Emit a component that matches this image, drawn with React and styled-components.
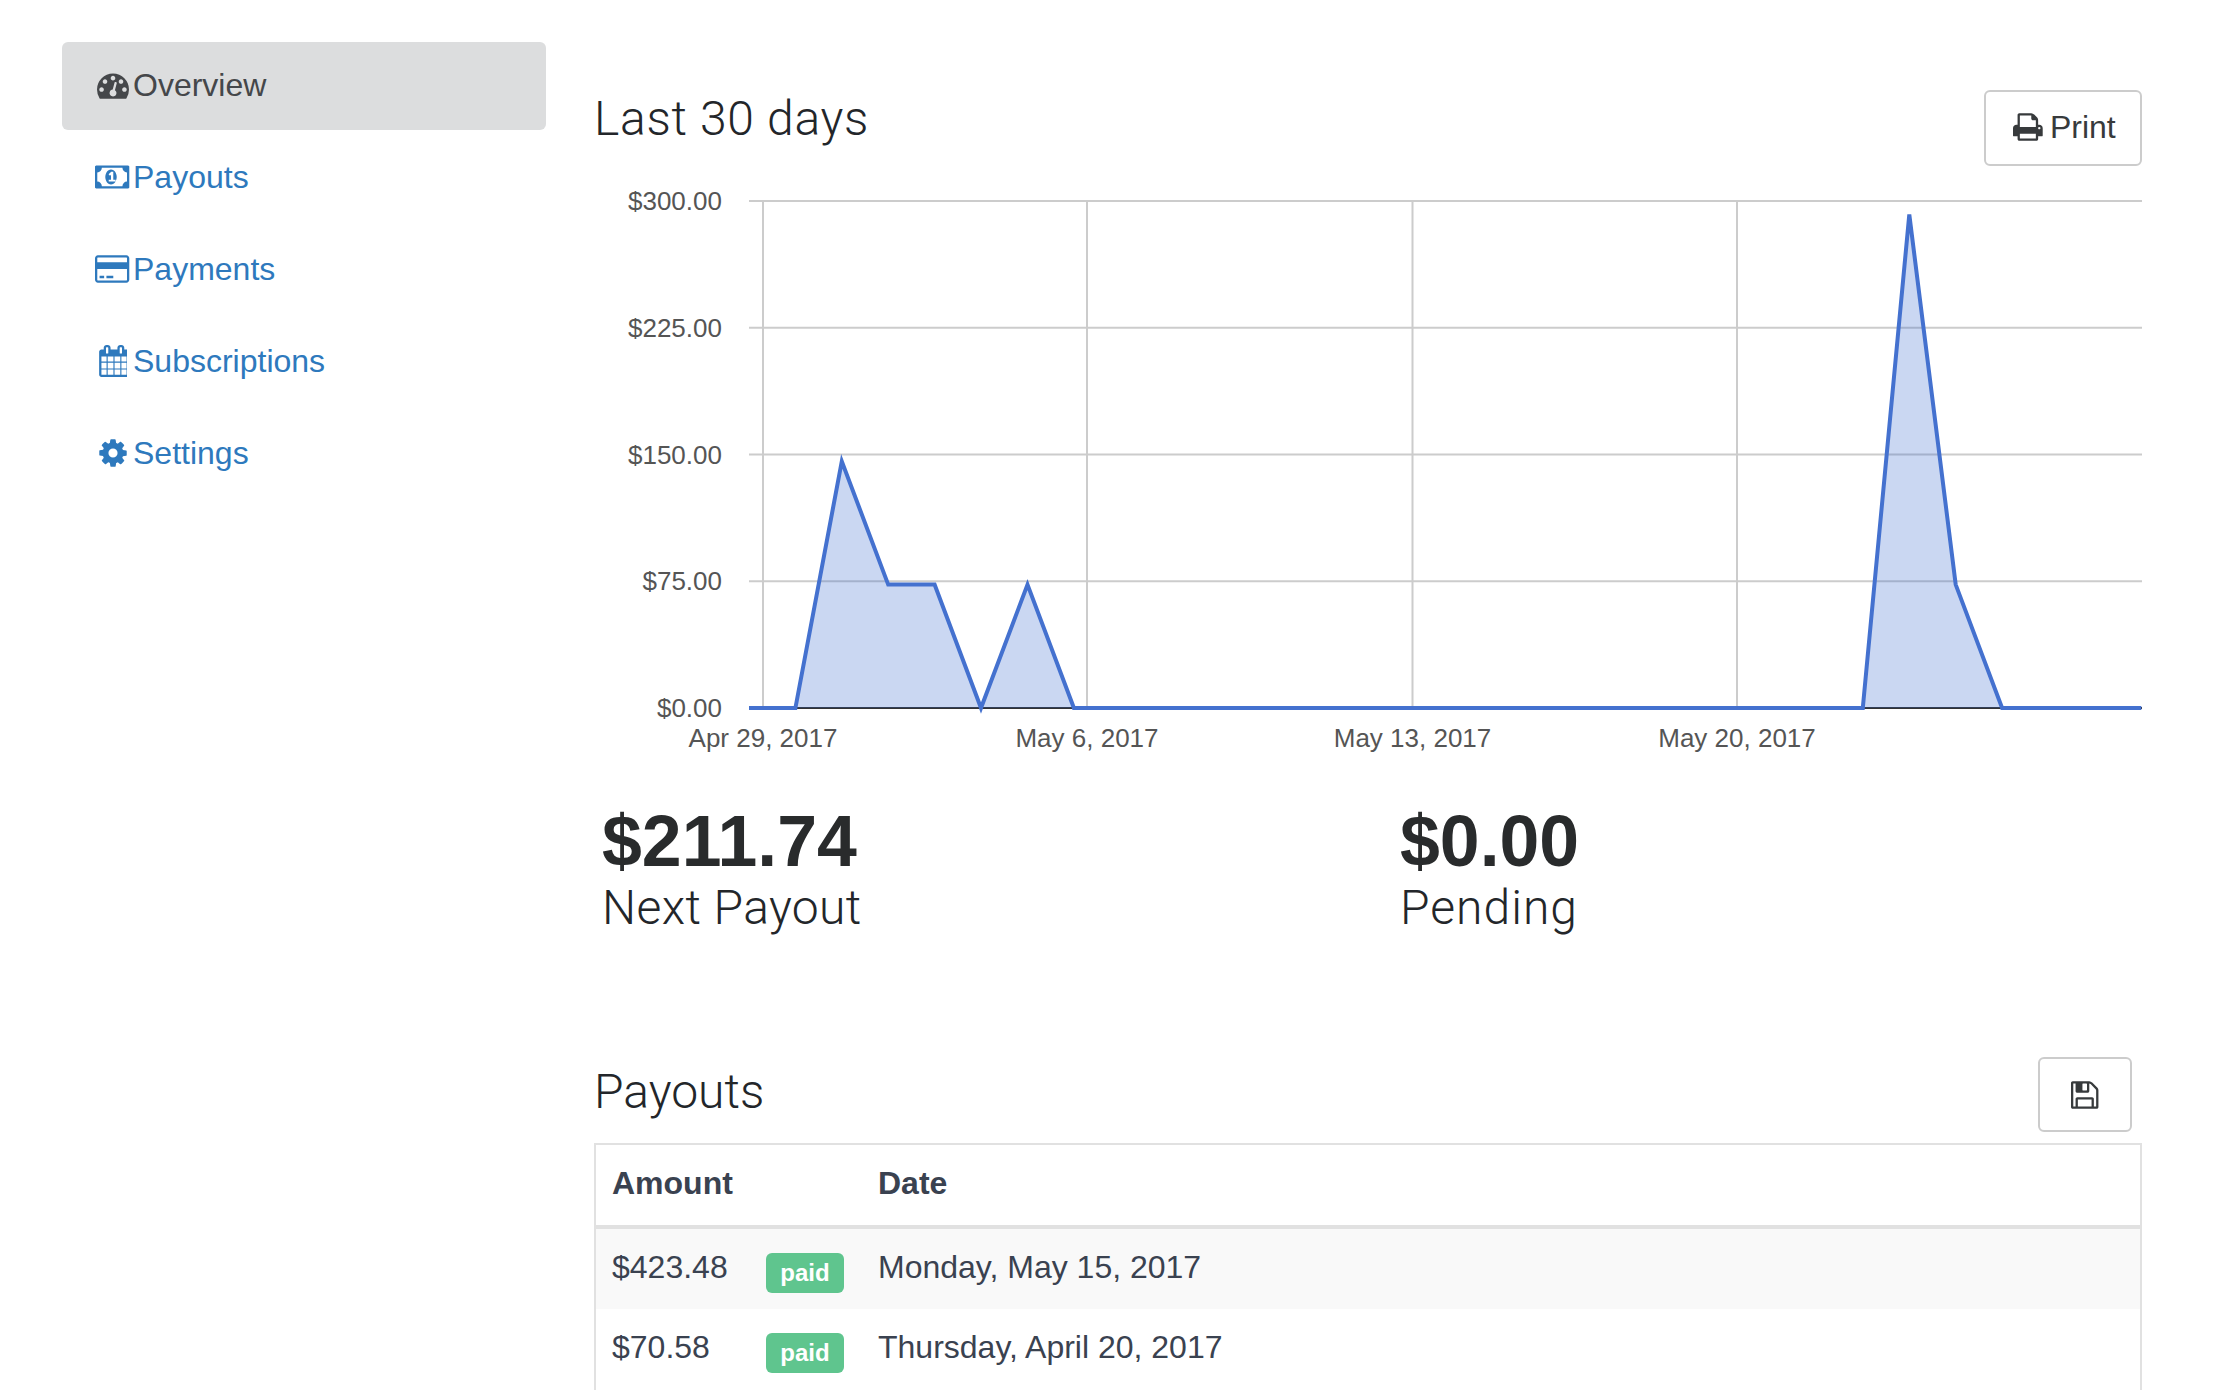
import React from "react";
import styled, { createGlobalStyle } from "styled-components";

const GlobalStyle = createGlobalStyle`
  html, body {
    margin: 0;
    height: 100%;
    overflow: hidden;
    background: #fff;
  }
  body {
    font-family: "Liberation Sans", Arial, sans-serif;
    font-size: 32px;
    color: #373a3c;
  }
`;

// font awesome 4 glyphs, all on a 1792 tall box
const glyphs = {
  gauge: { w: 1792, d: "M384 1152q0-53-37.500-90.500t-90.500-37.500-90.500 37.500-37.500 90.500 37.500 90.500 90.500 37.500 90.500-37.500 37.500-90.500zm192-448q0-53-37.500-90.500t-90.500-37.500-90.500 37.500-37.500 90.500 37.500 90.500 90.500 37.500 90.500-37.500 37.500-90.500zm428 481l101-382q6-26-7.500-48.500t-38.500-29.500-48 6.500-30 39.500l-101 382q-60 5-107 43.500t-63 98.500q-20 77 20 146t117 89 146-20 89-117q16-60-6-117t-72-91zm660-33q0-53-37.500-90.500t-90.500-37.500-90.500 37.500-37.500 90.500 37.500 90.500 90.500 37.500 90.500-37.500 37.500-90.500zm-640-640q0-53-37.500-90.500t-90.500-37.500-90.500 37.500-37.500 90.500 37.500 90.500 90.500 37.500 90.500-37.500 37.500-90.500zm448 192q0-53-37.500-90.500t-90.500-37.500-90.500 37.500-37.500 90.500 37.500 90.500 90.500 37.500 90.500-37.500 37.500-90.500zm320 448q0 261-141 483-19 29-54 29h-1402q-35 0-54-29-141-221-141-483 0-182 71-348t191-286 286-191 348-71 348 71 286 191 191 286 71 348z" },
  money: { w: 1920, d: "M768 1152h384v-96h-128v-448h-114l-148 137 77 80q42-37 55-57h2v288h-128v96zm448-256q0 70-21 142t-59.500 134-101.500 101-138 39-138-39-101.500-101-59.500-134-21-142 21-142 59.500-134 101.500-101 138-39 138 39 101.500 101 59.500 134 21 142zm576 256v-512q-106 0-181-75t-75-181h-1152q0 106-75 181t-181 75v512q106 0 181 75t75 181h1152q0-106 75-181t181-75zm128-832v1152q0 26-19 45t-45 19h-1792q-26 0-45-19t-19-45v-1152q0-26 19-45t45-19h1792q26 0 45 19t19 45z" },
  card: { w: 1920, d: "M1760 128q66 0 113 47t47 113v1216q0 66-47 113t-113 47h-1600q-66 0-113-47t-47-113v-1216q0-66 47-113t113-47h1600zm-1600 128q-13 0-22.500 9.500t-9.500 22.500v224h1664v-224q0-13-9.500-22.500t-22.500-9.500h-1600zm1600 1280q13 0 22.500-9.500t9.500-22.500v-608h-1664v608q0 13 9.500 22.500t22.500 9.500h1600zm-1504-128v-128h256v128h-256zm384 0v-128h384v128h-384z" },
  calendar: { w: 1664, d: "M192 1664h288v-288h-288v288zm352 0h320v-288h-320v288zm-352-352h288v-320h-288v320zm352 0h320v-320h-320v320zm-352-384h288v-288h-288v288zm736 736h320v-288h-320v288zm-384-736h320v-288h-320v288zm768 736h288v-288h-288v288zm-384-352h320v-320h-320v320zm-352-864v-288q0-13-9.500-22.500t-22.500-9.500h-64q-13 0-22.500 9.500t-9.500 22.500v288q0 13 9.500 22.500t22.500 9.500h64q13 0 22.500-9.500t9.500-22.500zm736 864h288v-320h-288v320zm-384-384h320v-288h-320v288zm384 0h288v-288h-288v288zm32-480v-288q0-13-9.500-22.500t-22.500-9.500h-64q-13 0-22.500 9.500t-9.500 22.500v288q0 13 9.500 22.500t22.500 9.500h64q13 0 22.500-9.500t9.500-22.500zm384-64v1280q0 52-38 90t-90 38h-1408q-52 0-90-38t-38-90v-1280q0-52 38-90t90-38h128v-96q0-66 47-113t113-47h64q66 0 113 47t47 113v96h384v-96q0-66 47-113t113-47h64q66 0 113 47t47 113v96h128q52 0 90 38t38 90z" },
  cog: { w: 1792, d: "M1152 896q0-106-75-181t-181-75-181 75-75 181 75 181 181 75 181-75 75-181zm512-109v222q0 12-8 23t-20 13l-185 28q-19 54-39 91 35 50 107 138 10 12 10 25t-9 23q-27 37-99 108t-94 71q-12 0-26-9l-138-108q-44 23-91 38-16 136-29 186-7 28-36 28h-222q-14 0-24.500-8.500t-11.500-21.500l-28-184q-49-16-90-37l-141 107q-10 9-25 9-14 0-25-11-126-114-165-168-7-10-7-23 0-12 8-23 15-21 51-66.500t54-70.500q-27-50-41-99l-183-27q-13-2-21-12.500t-8-23.500v-222q0-12 8-23t19-13l186-28q14-46 39-92-40-57-107-138-10-12-10-24 0-10 9-23 26-36 98.500-107.500t94.500-71.500q13 0 26 10l138 107q44-23 91-38 16-136 29-186 7-28 36-28h222q14 0 24.500 8.500t11.500 21.500l28 184q49 16 90 37l142-107q9-9 24-9 13 0 25 10 129 119 165 170 7 8 7 22 0 12-8 23-15 21-51 66.500t-54 70.500q26 50 41 98l183 28q13 2 21 12.500t8 23.500z" },
  print: { w: 1664, d: "M384 1536h896v-256h-896v256zm0-640h896v-384h-160q-40 0-68-28t-28-68v-160h-640v640zm1152 64q0-26-19-45t-45-19-45 19-19 45 19 45 45 19 45-19 19-45zm128 0v416q0 13-9.500 22.500t-22.500 9.500h-224v160q0 40-28 68t-68 28h-960q-40 0-68-28t-28-68v-160h-224q-13 0-22.500-9.500t-9.500-22.500v-416q0-79 56.500-135.500t135.500-56.500h64v-544q0-40 28-68t68-28h672q40 0 88 20t76 48l152 152q28 28 48 76t20 88v256h64q79 0 135.500 56.500t56.500 135.500z" },
  save: { w: 1536, d: "M384 1536h768v-384h-768v384zm896 0h128v-896q0-14-10-38.500t-20-34.500l-281-281q-10-10-34-20t-39-10v416q0 40-28 68t-68 28h-576q-40 0-68-28t-28-68v-416h-128v1280h128v-416q0-40 28-68t68-28h832q40 0 68 28t28 68v416zm-384-928v-320q0-13-9.500-22.500t-22.500-9.500h-192q-13 0-22.500 9.500t-9.500 22.500v320q0 13 9.500 22.500t22.500 9.500h192q13 0 22.500-9.500t9.500-22.500zm640 32v928q0 40-28 68t-68 28h-1344q-40 0-68-28t-28-68v-1344q0-40 28-68t68-28h928q40 0 88 20t76 48l280 280q28 28 48 76t20 88z" },
};

function Glyph({ name }) {
  const g = glyphs[name];
  return (
    <GlyphSvg viewBox={`0 0 ${g.w} 1792`} $w={g.w}>
      <path d={g.d} fill="currentColor" />
    </GlyphSvg>
  );
}

const navItems = [
  { label: "Overview", icon: "gauge", active: true },
  { label: "Payouts", icon: "money" },
  { label: "Payments", icon: "card" },
  { label: "Subscriptions", icon: "calendar" },
  { label: "Settings", icon: "cog" },
];

const payouts = [
  { amount: "$423.48", date: "Monday, May 15, 2017" },
  { amount: "$70.58", date: "Thursday, April 20, 2017" },
];

// chart geometry, in svg pixels
const PLOT = { left: 155, right: 1548, top: 35, bottom: 542, dayStep: 46.41, maxValue: 300 };
const yTicks = [300, 225, 150, 75, 0];
const xTicks = [
  { x: 169, label: "Apr 29, 2017" },
  { x: 493, label: "May 6, 2017" },
  { x: 818.5, label: "May 13, 2017" },
  { x: 1143, label: "May 20, 2017" },
];
const samples = { 2: 146, 3: 73, 4: 73, 6: 73, 25: 292, 26: 73 };
const points = Array.from({ length: 31 }, (_, i) => {
  const v = samples[i] || 0;
  const x = PLOT.left + i * PLOT.dayStep;
  const y = PLOT.bottom - (v / PLOT.maxValue) * (PLOT.bottom - PLOT.top);
  return `${x.toFixed(1)},${y.toFixed(1)}`;
}).join(" ");
const areaPoints = `${PLOT.left},${PLOT.bottom} ${points} ${PLOT.right},${PLOT.bottom}`;

function Chart() {
  const tickY = (v) => PLOT.bottom - (v / PLOT.maxValue) * (PLOT.bottom - PLOT.top);
  return (
    <ChartSvg viewBox="0 0 1548 600">
      {yTicks.map((v) => (
        <g key={v}>
          <line x1={PLOT.left} x2={PLOT.right} y1={tickY(v)} y2={tickY(v)} stroke={v === 0 ? "#333" : "#ccc"} strokeWidth="2" />
          <text x="128" y={tickY(v) + 9} textAnchor="end" fontSize="26" fill="#555">
            ${v}.00
          </text>
        </g>
      ))}
      {xTicks.map((t) => (
        <g key={t.label}>
          <line x1={t.x} x2={t.x} y1={PLOT.top} y2={PLOT.bottom} stroke="#ccc" strokeWidth="2" />
          <text x={t.x} y="581" textAnchor="middle" fontSize="26" fill="#555">
            {t.label}
          </text>
        </g>
      ))}
      <polygon points={areaPoints} fill="#3366cc" fillOpacity="0.26" />
      <polyline points={points} fill="none" stroke="#4471cf" strokeWidth="4" />
    </ChartSvg>
  );
}

export default function App() {
  return (
    <Page>
      <GlobalStyle />
      <Sidebar>
        {navItems.map((item) => (
          <NavLink key={item.label} $active={item.active}>
            <NavIcon>
              <Glyph name={item.icon} />
            </NavIcon>
            {item.label}
          </NavLink>
        ))}
      </Sidebar>
      <Main>
        <SectionHeader>
          <SectionTitle $lift={18} $track={0.7}>Last 30 days</SectionTitle>
          <ToolButton>
            <Glyph name="print" />
            Print
          </ToolButton>
        </SectionHeader>
        <Chart />
        <Stats>
          <Stat>
            <StatValue>$211.74</StatValue>
            <StatLabel $track={0.4}>Next Payout</StatLabel>
          </Stat>
          <Stat>
            <StatValue>$0.00</StatValue>
            <StatLabel $track={1}>Pending</StatLabel>
          </Stat>
        </Stats>
        <SectionHeader>
          <SectionTitle $lift={5}>Payouts</SectionTitle>
          <ToolButton $icon>
            <Glyph name="save" />
          </ToolButton>
        </SectionHeader>
        <TableWrap>
          <HeadRow>
            <span>Amount</span>
            <span>Date</span>
          </HeadRow>
          {payouts.map((p, i) => (
            <Row key={p.date} $striped={i % 2 === 0}>
              <AmountCell>
                <Amount>{p.amount}</Amount>
                <Badge>paid</Badge>
              </AmountCell>
              <span>{p.date}</span>
            </Row>
          ))}
        </TableWrap>
      </Main>
    </Page>
  );
}

const Page = styled.div`
  display: flex;
  align-items: flex-start;
  gap: 48px;
  height: 1390px;
  box-sizing: border-box;
  padding: 42px 72px 0 62px;
`;

const Sidebar = styled.nav`
  flex: 0 0 484px;
  display: flex;
  flex-direction: column;
  gap: 4px;
`;

const NavLink = styled.a`
  display: flex;
  align-items: center;
  height: 88px;
  padding: 0 32px 2px 30px;
  box-sizing: border-box;
  border-radius: 6px;
  color: ${(p) => (p.$active ? "#45474a" : "#2e79bd")};
  background: ${(p) => (p.$active ? "#dcddde" : "transparent")};
`;

const NavIcon = styled.span`
  display: flex;
  justify-content: center;
  width: 41px;
`;

const GlyphSvg = styled.svg`
  display: block;
  width: ${(p) => (p.$w * 32) / 1792}px;
  height: 32px;
  flex: none;
`;

const Main = styled.main`
  flex: 1;
  min-width: 0;
  height: 100%;
  display: flex;
  flex-direction: column;
  margin-top: 48px;
`;

const SectionHeader = styled.div`
  display: flex;
  justify-content: space-between;
  align-items: center;
`;

const SectionTitle = styled.h2`
  margin: 0 0 ${(p) => p.$lift}px;
  font-family: Roboto, "Liberation Sans", sans-serif;
  font-size: 48px;
  font-weight: 300;
  line-height: 1.2;
  letter-spacing: ${(p) => p.$track || 0}px;
  color: #23262a;
`;

const ToolButton = styled.button`
  display: flex;
  align-items: center;
  justify-content: center;
  gap: 7px;
  box-sizing: border-box;
  width: ${(p) => (p.$icon ? "94px" : "158px")};
  height: ${(p) => (p.$icon ? "75px" : "76px")};
  margin-right: ${(p) => (p.$icon ? "10px" : "0")};
  padding: ${(p) => (p.$icon ? "0" : "0 0 2px 3px")};
  border: 2px solid #ccc;
  border-radius: 6px;
  background: #fff;
  color: #373a3c;
  font: inherit;
`;

const ChartSvg = styled.svg`
  display: block;
  width: 1548px;
  height: 600px;
  flex: none;
  font-family: "Liberation Sans", Arial, sans-serif;
`;

const Stats = styled.div`
  display: grid;
  grid-template-columns: 798px 1fr;
  padding: 39px 0 120px 8px;
`;

const Stat = styled.div`
  display: flex;
  flex-direction: column;
`;

const StatValue = styled.div`
  font-size: 71.6px;
  font-weight: 700;
  line-height: 72px;
  color: #292b2c;
`;

const StatLabel = styled.div`
  margin-top: 2px;
  font-family: Roboto, "Liberation Sans", sans-serif;
  font-weight: 300;
  font-size: 48px;
  line-height: 58px;
  letter-spacing: ${(p) => p.$track}px;
  color: #23262a;
`;

const TableWrap = styled.div`
  flex: 1;
  margin-top: 11px;
  border: 2px solid #e1e1e1;
  border-bottom: 0;
  color: #3a4250;
`;

const HeadRow = styled.div`
  display: grid;
  grid-template-columns: 266px 1fr;
  align-items: center;
  height: 77px;
  padding: 0 16px 3px;
  border-bottom: 4px solid #e1e1e1;
  font-weight: 700;
`;

const Row = styled.div`
  display: grid;
  grid-template-columns: 266px 1fr;
  align-items: center;
  height: 77px;
  padding: 0 16px 3px;
  background: ${(p) => (p.$striped ? "#f9f9f9" : "#fff")};
`;

const AmountCell = styled.div`
  display: flex;
  align-items: center;
`;

const Amount = styled.span`
  width: 154px;
`;

const Badge = styled.span`
  display: flex;
  align-items: center;
  justify-content: center;
  width: 78px;
  height: 40px;
  margin-top: 11px;
  border-radius: 6px;
  background: #5fc58e;
  color: #fff;
  font-size: 24px;
  font-weight: 700;
`;
